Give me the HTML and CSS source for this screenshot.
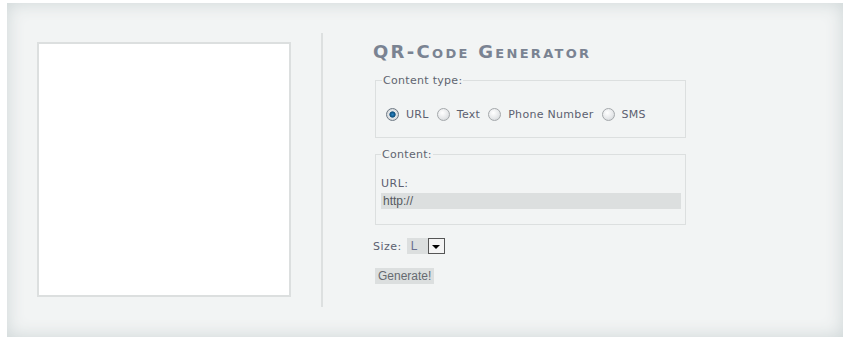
FILE: index.html
```html
<!DOCTYPE html>
<html lang="en">
<head>
    <meta charset="UTF-8">
    <title>QR-Code Generator</title>
    <link rel="stylesheet" href="styles.css">
</head>
<body>
    <div class="panel">
        <div class="preview-col">
            <div class="preview"></div>
        </div>
        <div class="divider"></div>
        <div class="form-col">
            <h1 class="title">QR-Code Generator</h1>

            <fieldset class="box">
                <legend>Content type:</legend>
                <div class="types">
                    <label><input type="radio" name="type" checked><span>URL</span></label>
                    <label><input type="radio" name="type"><span>Text</span></label>
                    <label><input type="radio" name="type"><span>Phone Number</span></label>
                    <label><input type="radio" name="type"><span>SMS</span></label>
                </div>
            </fieldset>

            <fieldset class="box content">
                <legend>Content:</legend>
                <div class="field-label">URL:</div>
                <input class="text-input" type="text" value="http://">
            </fieldset>

            <div class="size-row">
                <span class="size-label">Size:</span>
                <div class="select">
                    <span class="select-value">L</span>
                    <span class="select-btn"><span class="arrow"></span></span>
                </div>
            </div>

            <button class="generate">Generate!</button>
        </div>
    </div>
</body>
</html>
```

FILE: styles.css
```css
body {
    margin: 0;
    background-color: #ffffff;
    font-family: "DejaVu Sans", Verdana, sans-serif;
}

.panel {
    display: flex;
    width: 836px;
    height: 334px;
    margin: 3px 0 0 7px;
    padding-top: 30px;
    box-sizing: border-box;
    background-color: #f2f4f4;
    box-shadow: inset 0 0 18px #cdd5d6;
}

.preview-col {
    padding: 9px 30px 0 30px;
}

.preview {
    width: 250px;
    height: 251px;
    background-color: #ffffff;
    border: 2px solid #dcdfdf;
}

.divider {
    width: 2px;
    height: 274px;
    background-color: #dde0e0;
}

.form-col {
    padding-left: 50px;
    width: 313px;
}

.title {
    margin: 9px 0 0 0;
    font-size: 18px;
    font-variant: small-caps;
    letter-spacing: 2.3px;
    color: #7a8392;
    line-height: 20px;
}

.box {
    margin: 12px 0 0 2px;
    padding: 0 6px;
    border: 1px solid #dcdfdf;
    width: 297px;
    font-size: 11px;
    color: #5c5f70;
}

.box legend {
    padding: 0 1px;
    color: #606470;
    letter-spacing: 0.3px;
}

.types {
    display: flex;
    align-items: center;
    height: 33px;
    padding: 11px 0 6px 4px;
}

.types label {
    display: flex;
    align-items: center;
    margin-right: 8px;
    letter-spacing: 0.3px;
}

.types input {
    appearance: none;
    -webkit-appearance: none;
    margin: 0 7px 0 0;
    width: 13px;
    height: 13px;
    border-radius: 50%;
    border: 1px solid #a4a8ab;
    box-sizing: border-box;
    background: radial-gradient(circle at 40% 35%, #ffffff 0%, #e4e6e8 60%, #c8cccf 100%);
}

.types input:checked {
    border-color: #6f7a85;
    background: radial-gradient(circle at 50% 50%, #2c85c4 0%, #0b4e7c 35%, #e6e8ea 45%, #c4c8cb 100%);
}

.content {
    margin-top: 10px;
    padding: 0 4px 15px 5px;
}

.field-label {
    margin-top: 16px;
    line-height: 14px;
    letter-spacing: 0.5px;
}

.text-input {
    display: block;
    width: 300px;
    height: 16px;
    margin-top: 2px;
    padding: 0 2px;
    box-sizing: border-box;
    border: none;
    background-color: #dcdfdf;
    font-family: "Liberation Sans", Arial, sans-serif;
    font-size: 12px;
    color: #555a60;
}

.size-row {
    display: flex;
    align-items: center;
    margin-top: 13px;
    font-size: 11px;
    color: #5c5f70;
}

.size-label {
    letter-spacing: 0.5px;
    margin-right: 5px;
}

.select {
    display: flex;
    height: 16px;
    width: 38px;
    background-color: #dcdfdf;
}

.select-value {
    flex: 1;
    padding-left: 4px;
    line-height: 16px;
    font-family: "Liberation Sans", Arial, sans-serif;
    font-size: 12px;
    color: #6a7090;
}

.select-btn {
    display: flex;
    align-items: center;
    justify-content: center;
    width: 15px;
    height: 14px;
    border: 1px solid #555;
    background-color: #f4f4f4;
}

.arrow {
    width: 0;
    height: 0;
    margin-top: 2px;
    border-left: 4px solid transparent;
    border-right: 4px solid transparent;
    border-top: 4px solid #000;
}

.generate {
    display: block;
    margin: 14px 0 0 2px;
    height: 16px;
    padding: 0 3px;
    border: none;
    background-color: #dcdfdf;
    font-family: "Liberation Sans", Arial, sans-serif;
    font-size: 12px;
    color: #666a70;
}
```
